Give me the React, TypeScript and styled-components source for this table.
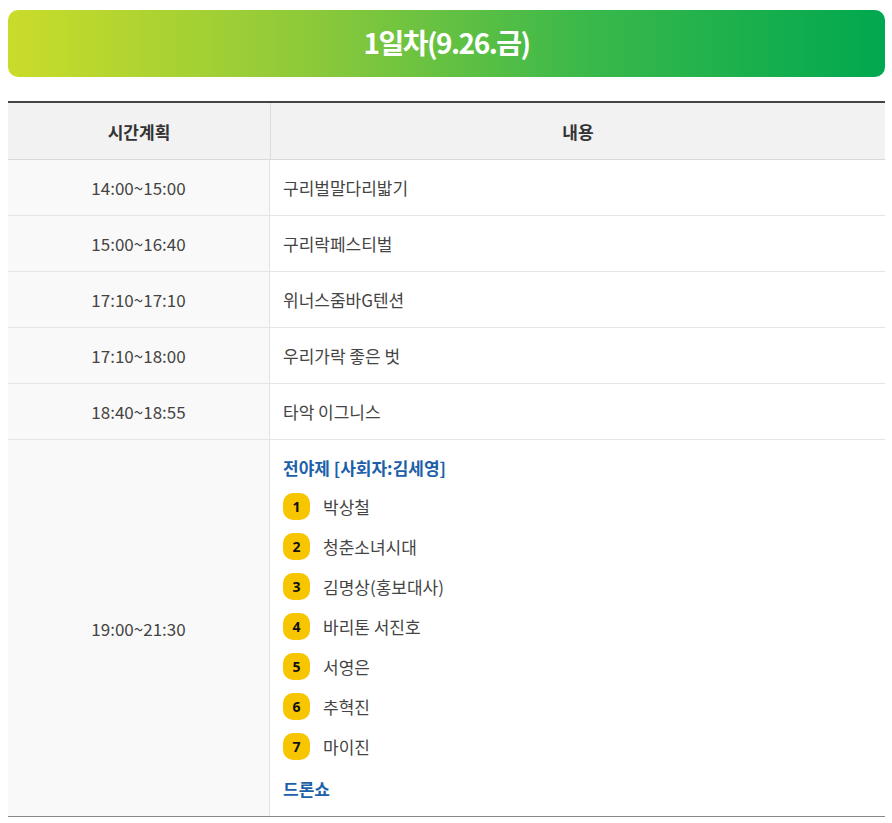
import React from "react";
import styled, { createGlobalStyle } from "styled-components";

const Global = createGlobalStyle`
  html, body { margin: 0; padding: 0; background: #fff; }
  body { font-family: "Noto Sans CJK KR", "Noto Sans", sans-serif; color: #333; }
`;

const Page = styled.div`
  padding: 10px 7px 0 8px;
  display: flex;
  flex-direction: column;
  gap: 24px;
`;

const Banner = styled.h2`
  margin: 0;
  height: 67px;
  padding-bottom: 3px;
  box-sizing: border-box;
  border-radius: 10px;
  background: linear-gradient(90deg, #cadc2a 0%, #8cc93a 35%, #3cb94a 65%, #00a84f 100%);
  color: #fff;
  display: flex;
  align-items: center;
  justify-content: center;
  font-size: 28px;
  font-weight: 700;
  letter-spacing: -1.5px;
`;

const Table = styled.div`
  border-top: 2px solid #444;
  border-bottom: 1px solid #888;
  display: grid;
  grid-template-columns: 262px 1fr;
`;

const HeadCell = styled.div`
  height: 56px;
  background: #f2f2f2;
  display: flex;
  align-items: center;
  justify-content: center;
  font-size: 17px;
  font-weight: 700;
  color: #333;
  border-bottom: 1px solid #d9d9d9;
  & + & { border-left: 1px solid #ddd; }
`;

const TimeCell = styled.div<{ $tall?: boolean }>`
  min-height: 55px;
  background: #f9f9f9;
  display: flex;
  align-items: center;
  justify-content: center;
  font-size: 17px;
  color: #444;
  border-bottom: ${(p) => (p.$tall ? "none" : "1px solid #e5e5e5")};
  border-right: 1px solid #e3e3e3;
`;

const ContentCell = styled.div<{ $tall?: boolean }>`
  min-height: 55px;
  display: flex;
  flex-direction: column;
  justify-content: center;
  padding: ${(p) => (p.$tall ? "12px 13px 13px" : "0 13px")};
  font-size: 17px;
  color: #444;
  border-bottom: ${(p) => (p.$tall ? "none" : "1px solid #e5e5e5")};
`;

const SubTitle = styled.div`
  color: #1d5fa8;
  font-weight: 700;
  font-size: 17px;
  height: 30px;
  display: flex;
  align-items: center;
`;

const List = styled.ol`
  list-style: none;
  margin: 0;
  padding: 11px 0 14px;
  display: flex;
  flex-direction: column;
  gap: 14px;
`;

const Item = styled.li`
  display: flex;
  align-items: center;
  gap: 13px;
  height: 26px;
`;

const Badge = styled.span`
  width: 27px;
  height: 27px;
  border-radius: 10px;
  background: #f7c600;
  color: #111;
  font-size: 14px;
  font-weight: 700;
  display: flex;
  align-items: center;
  justify-content: center;
  font-family: "Noto Sans", sans-serif;
`;

const rows = [
  ["14:00~15:00", "구리벌말다리밟기"],
  ["15:00~16:40", "구리락페스티벌"],
  ["17:10~17:10", "위너스줌바G텐션"],
  ["17:10~18:00", "우리가락 좋은 벗"],
  ["18:40~18:55", "타악 이그니스"],
];

const performers = ["박상철", "청춘소녀시대", "김명상(홍보대사)", "바리톤 서진호", "서영은", "추혁진", "마이진"];

export default function App() {
  return (
    <>
      <Global />
      <Page>
        <Banner>1일차(9.26.금)</Banner>
        <Table>
          <HeadCell>시간계획</HeadCell>
          <HeadCell>내용</HeadCell>
          {rows.map(([t, c]) => (
            <React.Fragment key={t + c}>
              <TimeCell>{t}</TimeCell>
              <ContentCell>{c}</ContentCell>
            </React.Fragment>
          ))}
          <TimeCell $tall>19:00~21:30</TimeCell>
          <ContentCell $tall>
            <SubTitle>전야제 [사회자:김세영]</SubTitle>
            <List>
              {performers.map((p, i) => (
                <Item key={p}>
                  <Badge>{i + 1}</Badge>
                  {p}
                </Item>
              ))}
            </List>
            <SubTitle>드론쇼</SubTitle>
          </ContentCell>
        </Table>
      </Page>
    </>
  );
}
